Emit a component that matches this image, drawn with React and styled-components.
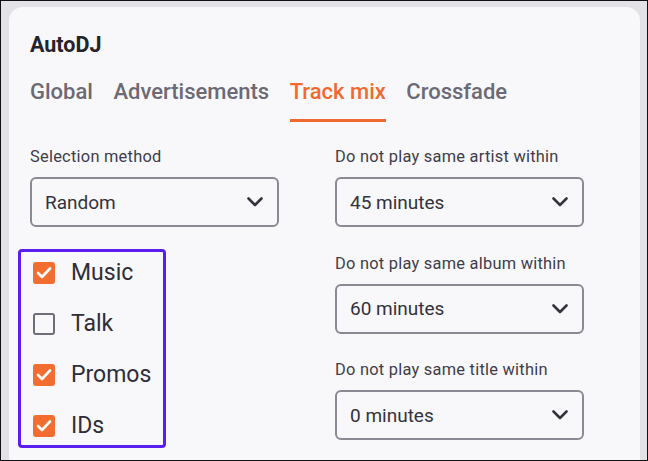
import styled, { createGlobalStyle } from "styled-components";

const GlobalStyle = createGlobalStyle`
  html, body {
    margin: 0;
    padding: 0;
    background: #e3e2e7;
  }
  * {
    box-sizing: border-box;
  }
`;

const Frame = styled.div`
  width: 648px;
  height: 461px;
  border: 1px solid #111;
  background: #e3e2e7;
  padding: 6px 7px 0 8px;
  overflow: hidden;
  font-family: Roboto, "Liberation Sans", sans-serif;
`;

const Card = styled.div`
  height: 480px;
  background: #f8f8fa;
  border-radius: 14px 14px 0 0;
  padding: 26px 21px 0;
`;

const Title = styled.h2`
  margin: 0;
  font-size: 21.5px;
  line-height: 24px;
  font-weight: 700;
  color: #25242c;
`;

const Tabs = styled.div`
  display: flex;
  gap: 20.5px;
  margin-top: 22px;
`;

const Tab = styled.div`
  font-size: 22px;
  line-height: 26px;
  font-weight: 500;
  padding-bottom: 14px;
  border-bottom: 3px solid ${(p) => (p.$active ? "#f06a30" : "transparent")};
  color: ${(p) => (p.$active ? "#f06a30" : "#6b6a75")};
`;

const Grid = styled.div`
  display: grid;
  grid-template-columns: 305px 1fr;
  margin-top: 25px;
`;

const Column = styled.div`
  display: flex;
  flex-direction: column;
  gap: 26.5px;
`;

const Field = styled.div`
  display: flex;
  flex-direction: column;
`;

const Label = styled.label`
  font-size: 16.4px;
  letter-spacing: 0.25px;
  line-height: 20px;
  color: #3f3d4b;
  margin-bottom: 10px;
`;

const Select = styled.div`
  width: 249px;
  height: 50px;
  border: 2px solid #8b8a93;
  border-radius: 6px;
  display: flex;
  align-items: center;
  justify-content: space-between;
  padding: 0 14px 0 13px;
  font-size: 19px;
  color: #33323c;
`;

const Highlight = styled.div`
  width: 148px;
  margin-left: -12px;
  margin-top: -5px;
  border: 3px solid #5b1ef0;
  border-radius: 4px;
  padding: 10px 12px 8px;
  display: flex;
  flex-direction: column;
  gap: 29px;
`;

const CheckRow = styled.div`
  display: flex;
  align-items: center;
  height: 22px;
  gap: 16px;
  font-size: 23px;
  line-height: 22px;
  color: #2f2e38;
`;

const Box = styled.span`
  width: 22px;
  height: 22px;
  border-radius: 3px;
  flex: none;
  display: flex;
  align-items: center;
  justify-content: center;
  background: ${(p) => (p.$checked ? "#f26d2f" : "transparent")};
  border: ${(p) => (p.$checked ? "none" : "2.5px solid #6f6e78")};
`;

const Chevron = () => (
  <svg width="16" height="10" viewBox="0 0 16 10" fill="none">
    <polyline
      points="1.5,1.5 8,8 14.5,1.5"
      stroke="#35343e"
      strokeWidth="2.6"
      strokeLinecap="round"
      strokeLinejoin="round"
    />
  </svg>
);

const Check = () => (
  <svg width="16" height="14" viewBox="0 0 16 14" fill="none">
    <polyline
      points="2,7 6,11 14,2.5"
      stroke="#fff"
      strokeWidth="2.6"
      strokeLinecap="round"
      strokeLinejoin="round"
    />
  </svg>
);

const tabs = ["Global", "Advertisements", "Track mix", "Crossfade"];
const types = [
  { name: "Music", on: true },
  { name: "Talk", on: false },
  { name: "Promos", on: true },
  { name: "IDs", on: true },
];
const limits = [
  { label: "Do not play same artist within", value: "45 minutes" },
  { label: "Do not play same album within", value: "60 minutes" },
  { label: "Do not play same title within", value: "0 minutes" },
];

const App = () => {
  return (
    <Frame>
      <GlobalStyle />
      <Card>
        <Title>AutoDJ</Title>
        <Tabs>
          {tabs.map((t) => (
            <Tab key={t} $active={t === "Track mix"}>
              {t}
            </Tab>
          ))}
        </Tabs>
        <Grid>
          <Column>
            <Field>
              <Label>Selection method</Label>
              <Select>
                Random
                <Chevron />
              </Select>
            </Field>
            <Highlight>
              {types.map((t) => (
                <CheckRow key={t.name}>
                  <Box $checked={t.on}>{t.on && <Check />}</Box>
                  {t.name}
                </CheckRow>
              ))}
            </Highlight>
          </Column>
          <Column>
            {limits.map((l) => (
              <Field key={l.label}>
                <Label>{l.label}</Label>
                <Select>
                  {l.value}
                  <Chevron />
                </Select>
              </Field>
            ))}
          </Column>
        </Grid>
      </Card>
    </Frame>
  );
};

export default App;
